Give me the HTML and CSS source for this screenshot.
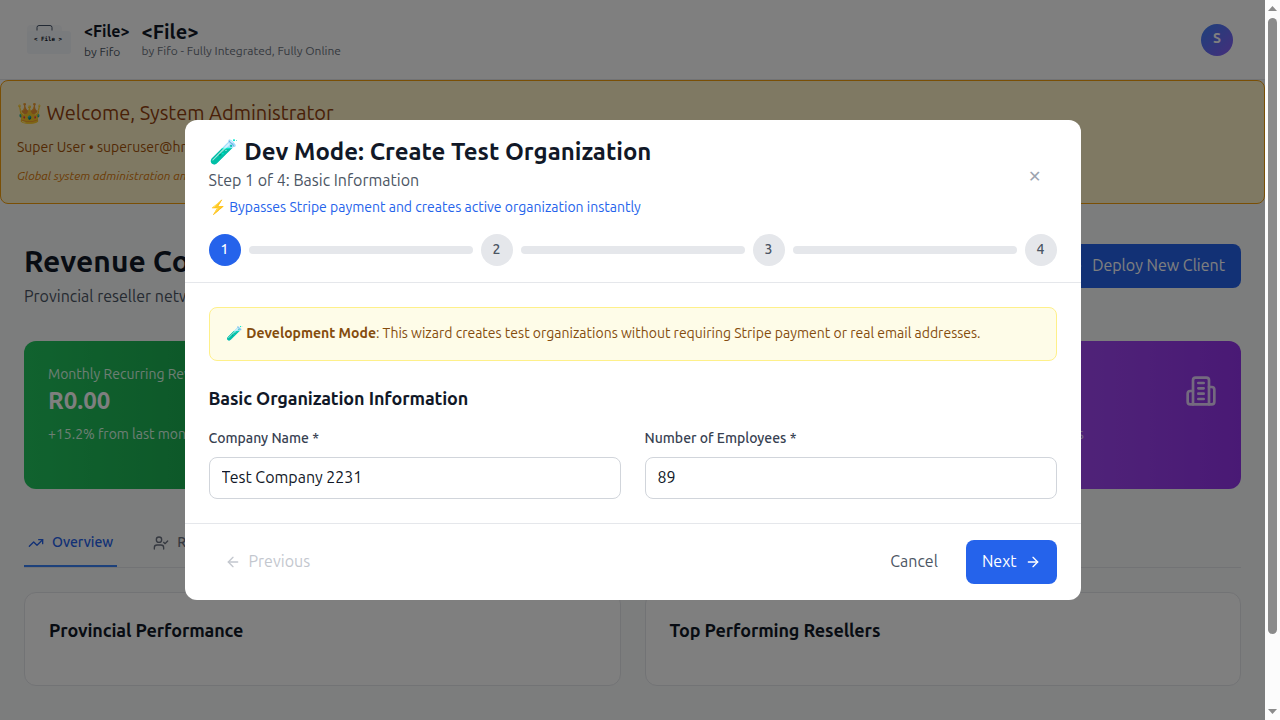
FILE: index.html
```html
<!DOCTYPE html>
<html lang="en">
<head>
<meta charset="utf-8">
<title>Revenue Command Center</title>
<link rel="stylesheet" href="styles.css">
</head>
<body>
<div class="window">
  <div class="page">
    <header class="topbar">
      <svg class="logo" width="48" height="48" viewBox="0 0 48 48">
        <rect x="3" y="9" width="35" height="12" rx="4" fill="#f6f8fb"/>
        <rect x="3" y="15" width="44" height="23" rx="3" fill="#f3f6fa"/>
        <path d="M13 14.5v-3q0-2 2-2h11q2 0 2 2v3" fill="none" stroke="#475569" stroke-width="1"/>
        <text class="logo-text" x="24" y="25" text-anchor="middle">&lt; File &gt;</text>
      </svg>
      <div class="brand-small">
        <div class="brand-small-name">&lt;File&gt;</div>
        <div class="brand-small-by">by Fifo</div>
      </div>
      <div class="brand">
        <div class="brand-name">&lt;File&gt;</div>
        <div class="brand-tag">by Fifo - Fully Integrated, Fully Online</div>
      </div>
      <div class="avatar">S</div>
    </header>
    <section class="banner">
      <div class="banner-title">👑 Welcome, System Administrator</div>
      <div class="banner-user">Super User • superuser@hr.com</div>
      <div class="banner-note">Global system administration and oversight</div>
    </section>
    <main class="main">
      <div class="heading">
        <div>
          <h1>Revenue Command</h1>
          <p class="heading-sub">Provincial reseller network</p>
        </div>
        <div class="deploy">
          <svg class="icon" viewBox="0 0 24 24"><path d="M5 12h14M12 5v14"/></svg>
          <span class="text">Deploy New Client</span>
        </div>
      </div>
      <div class="stats">
        <div class="stat green">
          <div>
            <div class="stat-label">Monthly Recurring Revenue</div>
            <div class="stat-value">R0.00</div>
            <div class="stat-note">+15.2% from last month</div>
          </div>
        </div>
        <div class="stat blue"></div>
        <div class="stat orange"></div>
        <div class="stat purple">
          <div>
            <div class="stat-label">Clients</div>
            <div class="stat-value">0</div>
            <div class="stat-note">Across 9 regions</div>
          </div>
          <svg class="icon icon-lg" viewBox="0 0 24 24"><path d="M6 22V4a2 2 0 0 1 2-2h8a2 2 0 0 1 2 2v18Z"/><path d="M6 12H4a2 2 0 0 0-2 2v6a2 2 0 0 0 2 2h2"/><path d="M18 9h2a2 2 0 0 1 2 2v9a2 2 0 0 1-2 2h-2"/><path d="M10 6h4M10 10h4M10 14h4M10 18h4"/></svg>
        </div>
      </div>
      <nav class="tabs">
        <div class="tab active">
          <svg class="icon" viewBox="0 0 24 24"><path d="M22 7 13.5 15.5 8.5 10.5 2 17"/><path d="M16 7h6v6"/></svg>
          <span class="text">Overview</span>
        </div>
        <div class="tab">
          <svg class="icon" viewBox="0 0 24 24"><path d="M16 21v-2a4 4 0 0 0-4-4H6a4 4 0 0 0-4 4v2"/><circle cx="9" cy="7" r="4"/><path d="m16 11 2 2 4-4"/></svg>
          <span class="text">Resellers</span>
        </div>
      </nav>
      <div class="panels">
        <div class="panel"><h3>Provincial Performance</h3></div>
        <div class="panel"><h3>Top Performing Resellers</h3></div>
      </div>
    </main>
  </div>
  <div class="scrollbar">
    <svg width="9" height="5" viewBox="0 0 9 5"><path d="M0 5 4.5 0 9 5z" fill="#8b8b8b"/></svg>
    <div class="thumb"></div>
    <svg class="down" width="9" height="5" viewBox="0 0 9 5"><path d="M0 0h9L4.5 5z" fill="#8b8b8b"/></svg>
  </div>
</div>

<div class="overlay">
  <div class="modal">
    <div class="modal-head">
      <div class="modal-top">
        <div>
          <h2>🧪 Dev Mode: Create Test Organization</h2>
          <p class="step-text">Step 1 of 4: Basic Information</p>
          <p class="bypass"><span class="emoji">⚡</span> Bypasses Stripe payment and creates active organization instantly</p>
        </div>
        <button class="close">✕</button>
      </div>
      <div class="steps">
        <div class="dot current">1</div><div class="bar"></div>
        <div class="dot">2</div><div class="bar"></div>
        <div class="dot">3</div><div class="bar"></div>
        <div class="dot">4</div>
      </div>
    </div>
    <div class="modal-body">
      <div class="alert"><span class="emoji">🧪</span> <strong>Development Mode</strong>: This wizard creates test organizations without requiring Stripe payment or real email addresses.</div>
      <h3>Basic Organization Information</h3>
      <div class="fields">
        <div class="field"><label>Company Name *</label><input type="text" value="Test Company 2231"></div>
        <div class="field"><label>Number of Employees *</label><input type="text" value="89"></div>
      </div>
    </div>
    <div class="modal-foot">
      <button class="btn prev"><svg class="icon" viewBox="0 0 24 24"><path d="m12 19-7-7 7-7"/><path d="M19 12H5"/></svg><span class="text">Previous</span></button>
      <div class="actions">
        <button class="btn"><span class="text">Cancel</span></button>
        <button class="btn primary"><span class="text">Next</span><svg class="icon" viewBox="0 0 24 24"><path d="M5 12h14"/><path d="m12 5 7 7-7 7"/></svg></button>
      </div>
    </div>
  </div>
</div>
</body>
</html>
```
FILE: styles.css
```css
* { box-sizing: border-box; }
body, h1, h2, h3, p { margin: 0; }
body {
  font-family: Ubuntu, "Open Sans", sans-serif;
  font-size: 16px;
  line-height: 24px;
  color: #111827;
  overflow: hidden;
}
button, input { font: inherit; color: inherit; }
button { border: 0; background: none; }
.icon {
  width: 16px;
  height: 16px;
  flex: none;
  fill: none;
  stroke: currentColor;
  stroke-width: 2;
  stroke-linecap: round;
  stroke-linejoin: round;
}
.icon-lg { width: 32px; height: 32px; margin-top: 10px; }
.text { padding-bottom: 2px; }
.emoji { margin-right: 0.5px; }

.window { display: flex; height: 720px; }
.page { flex: 1; min-width: 0; background: #f9fafb; overflow: hidden; }
.scrollbar {
  width: 15px;
  background: #fcfcfc;
  display: flex;
  flex-direction: column;
  align-items: center;
  padding: 6px 0;
}
.thumb { width: 9px; height: 616px; margin-top: 7px; border-radius: 5px; background: #8b8b8b; }
.down { margin-top: auto; }

.topbar {
  display: flex;
  align-items: center;
  height: 80px;
  padding: 0 32px 0 24px;
  background: #fff;
  border-bottom: 1px solid #e5e7eb;
}
.logo-text { font: bold 5.8px "DejaVu Sans Mono", monospace; fill: #0f172a; }
.brand-small { margin-left: 12px; width: 45.5px; }
.brand-small-name { margin-bottom: 2px; font-weight: 600; line-height: 22px; }
.brand-small-by { font-size: 12px; line-height: 16px; color: #4b5563; }
.brand { margin-left: 12px; }
.brand-name { font-size: 20px; font-weight: 700; line-height: 22px; }
.brand-tag { font-size: 12px; line-height: 16px; color: #6b7280; }
.avatar {
  margin-left: auto;
  width: 32px;
  height: 32px;
  border-radius: 50%;
  background: linear-gradient(135deg, #3b82f6, #8b5cf6);
  color: #fff;
  font-size: 14px;
  font-weight: 600;
  line-height: 28px;
  text-align: center;
}

.banner {
  height: 124px;
  padding: 16px;
  border: 1px solid #f59e0b;
  border-radius: 8px;
  background: #fef3c7;
  white-space: nowrap;
}
.banner-title { font-size: 20px; line-height: 32px; color: #92400e; }
.banner-user { margin-top: 8px; font-size: 14px; line-height: 20px; color: #a65309; }
.banner-note { margin-top: 11px; font-size: 12px; line-height: 16px; font-style: italic; color: #d97706; }

.main { padding: 40px 24px; }
.heading { display: flex; justify-content: space-between; align-items: flex-start; }
h1 { font-size: 30px; line-height: 34px; font-weight: 700; }
.heading-sub { margin-top: 6px; color: #4b5563; }
.deploy {
  display: flex;
  align-items: center;
  gap: 8px;
  height: 44px;
  padding: 0 16px;
  border-radius: 8px;
  background: #2563eb;
  color: #fff;
}
.stats { display: grid; grid-template-columns: repeat(4, 1fr); gap: 24px; margin-top: 33px; }
.stat {
  display: flex;
  justify-content: space-between;
  align-items: flex-start;
  height: 148px;
  padding: 24px;
  border-radius: 12px;
  color: #fff;
}
.green { background: linear-gradient(to right, #22c55e, #16a34a); }
.blue { background: linear-gradient(to right, #3b82f6, #2563eb); }
.orange { background: linear-gradient(to right, #f97316, #ea580c); }
.purple { background: linear-gradient(to right, #a855f7, #9333ea); }
.stat-label { margin-bottom: 2px; font-size: 14px; line-height: 18px; color: #dcfce7; }
.stat-value { font-size: 24px; line-height: 32px; font-weight: 700; }
.stat-note { margin-top: 8px; font-size: 14px; line-height: 18px; color: #dcfce7; }
.purple .stat-label, .purple .stat-note, .purple .icon { color: #e9d5ff; }
.purple .stat-note { width: 105px; text-align: right; white-space: nowrap; }

.tabs { display: flex; gap: 32px; margin-top: 32px; border-bottom: 1px solid #e5e7eb; }
.tab {
  display: flex;
  align-items: center;
  gap: 8px;
  height: 46px;
  padding: 0 4px;
  border-bottom: 2px solid transparent;
  font-size: 14px;
  font-weight: 500;
  color: #6b7280;
}
.tab.active { color: #2563eb; border-color: #3b82f6; }
.panels { display: grid; grid-template-columns: 1fr 1fr; gap: 24px; margin-top: 24px; }
.panel { height: 94px; padding: 24px; border: 1px solid #e5e7eb; border-radius: 12px; background: #fff; }
h3 { font-size: 18px; line-height: 26px; font-weight: 600; letter-spacing: -0.12px; }

.overlay {
  position: absolute;
  inset: 0 15px 0 0;
  display: flex;
  align-items: center;
  justify-content: center;
  background: rgba(0, 0, 0, 0.5);
}
.modal { width: 896px; height: 480px; border-radius: 12px; background: #fff; }
.modal-head { height: 163px; padding: 16px 24px; border-bottom: 1px solid #e5e7eb; }
.modal-top { display: flex; justify-content: space-between; align-items: center; height: 82px; }
h2 { font-size: 24px; line-height: 32px; font-weight: 700; }
.step-text { color: #4b5563; }
.bypass { margin-top: 4px; font-size: 14px; line-height: 22px; color: #2563eb; }
.close { padding: 7px 16px 9px; color: #9ca3af; }
.steps { display: flex; align-items: center; gap: 8px; margin-top: 16px; }
.dot {
  width: 32px;
  height: 32px;
  border-radius: 50%;
  background: #e5e7eb;
  color: #4b5563;
  font-size: 14px;
  font-weight: 500;
  line-height: 30px;
  text-align: center;
}
.dot.current { background: #2563eb; color: #fff; }
.bar { flex: 1; height: 8px; border-radius: 4px; background: #e5e7eb; }
.modal-body { padding: 24px; }
.alert {
  margin-bottom: 24px;
  padding: 16px;
  height: 54px;
  border: 1px solid #fef08a;
  border-radius: 8px;
  background: #fefce8;
  color: #854d0e;
  font-size: 14px;
  line-height: 18px;
}
.fields { display: grid; grid-template-columns: 1fr 1fr; gap: 24px; margin-top: 18px; }
.field { display: flex; flex-direction: column; gap: 10px; }
.field label { font-size: 14px; line-height: 18px; font-weight: 500; color: #374151; }
.field input { width: 100%; height: 42px; padding: 0 12px 2px; border: 1px solid #d1d5db; border-radius: 8px; }
.modal-foot {
  display: flex;
  justify-content: space-between;
  padding: 16px 24px;
  border-top: 1px solid #e5e7eb;
}
.actions { display: flex; gap: 12px; }
.btn {
  display: flex;
  align-items: center;
  gap: 8px;
  height: 44px;
  padding: 0 16px;
  border-radius: 8px;
  color: #4b5563;
}
.prev { color: #9ca3af; opacity: 0.6; }
.primary { background: #2563eb; color: #fff; }
```
